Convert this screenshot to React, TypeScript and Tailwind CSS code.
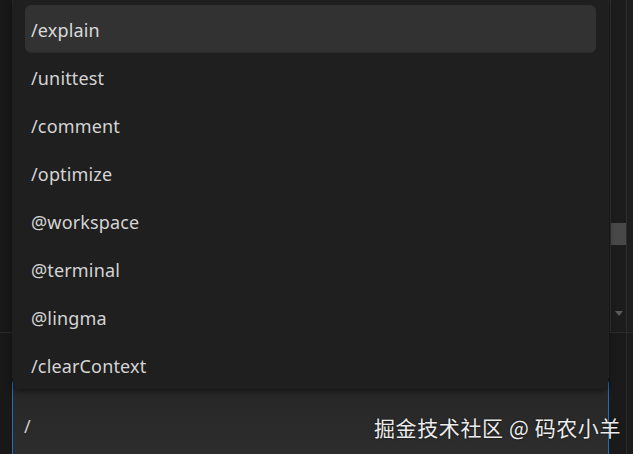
import React from "react";

const items = [
  "/explain",
  "/unittest",
  "/comment",
  "/optimize",
  "@workspace",
  "@terminal",
  "@lingma",
  "/clearContext",
];

export default function App() {
  return (
    <div
      className="flex h-[454px] w-[633px] overflow-hidden bg-[#1a1a1a]"
      style={{ fontFamily: '"Noto Sans", "Open Sans", sans-serif' }}
    >
      {/* left strip */}
      <div className="flex w-[12px] shrink-0 flex-col bg-[#181818]">
        <div className="h-[333px] border-b border-[#2a2a2a]" />
        <div className="flex-1" />
      </div>

      {/* main column */}
      <div className="relative z-10 flex w-[597px] shrink-0 flex-col">
        <div className="h-[378px] shrink-0 border-x border-[#2a2a2a] bg-[#1f1f1f]" />
        <div className="flex h-[90px] shrink-0 items-start rounded-md border border-[#1f6fb8] bg-gradient-to-b from-[#262626] to-[#2e2e2e] pl-[11px] pt-[34px]">
          <span className="text-[18px] leading-[26px] text-[#cccccc]">/</span>
        </div>

        {/* watermark */}
        <div
          className="pointer-events-none absolute left-[362px] top-[412px] z-20 whitespace-nowrap text-[21px] leading-[30px] tracking-[0.6px] text-[#ececec] [text-shadow:0_0_2px_rgba(0,0,0,0.8)]"
          style={{ fontFamily: '"Noto Sans CJK SC", "Noto Sans", sans-serif' }}
        >
          掘金技术社区 @ 码农小羊
        </div>

        {/* dropdown */}
        <div className="absolute left-[1px] right-[1px] top-0 flex h-[389px] flex-col rounded-b-md bg-[#1f1f1f] px-[12px] pt-[5px] shadow-[0_2px_6px_rgba(0,0,0,0.5)]">
          {items.map((it, i) => (
            <div
              key={it}
              className={
                i === 0
                  ? "flex h-[48px] shrink-0 items-center rounded-md border-b border-[#2a2a2a] bg-[#323232] px-[6px] pt-[3px] text-[18px] tracking-[0.15px] text-[#dadada]"
                  : "flex h-[48px] shrink-0 items-center px-[6px] pt-[3px] text-[18px] tracking-[0.15px] text-[#d4d4d4]"
              }
            >
              {it}
            </div>
          ))}
        </div>
      </div>

      {/* right strip */}
      <div className="relative flex w-[24px] shrink-0 flex-col">
        <div className="flex h-[333px] shrink-0 border-b border-[#2c2c2c]">
          <div className="w-[1px] bg-[#1c1c1c]" />
          <div className="flex w-[16px] flex-col border-l border-[#303030] bg-[#1c1c1c]">
            <div className="h-[223px]" />
            <div className="h-[22px] bg-[#484848]" />
            <div className="flex flex-1 items-end justify-center pb-[16px]">
              <svg width="8" height="5" viewBox="0 0 8 5">
                <path d="M0 0 L8 0 L4 5 Z" fill="#5a5a5a" />
              </svg>
            </div>
          </div>
          <div className="flex-1 border-l border-[#2e2e2e] bg-[#1e1e1e]" />
        </div>
        <div className="flex flex-1">
          <div className="w-[17px] bg-[#1a1a1a]" />
          <div className="flex-1 border-l border-[#2a2a2a] bg-[#1c1c1c]" />
        </div>
      </div>
    </div>
  );
}
